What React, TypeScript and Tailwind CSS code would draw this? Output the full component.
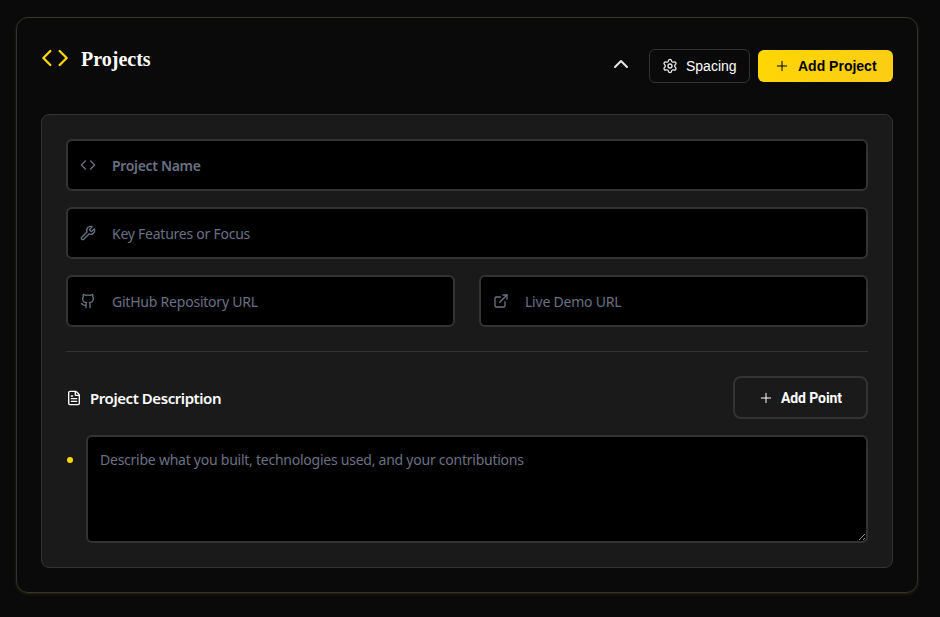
import type { LucideIcon } from 'lucide-react';
import { ChevronUp, Code, ExternalLink, FileText, Github, Plus, Settings, Wrench } from 'lucide-react';

type FieldProps = { icon: LucideIcon; placeholder: string; textClass: string };

function Field({ icon: Icon, placeholder, textClass }: FieldProps) {
  return (
    <label className="flex h-[52px] min-w-0 items-center gap-4 rounded-md border-2 border-[#333333] bg-black pl-3 pr-4">
      <Icon className="size-4 shrink-0 text-gray-500" />
      <input
        placeholder={placeholder}
        className={`relative top-px min-w-0 flex-1 bg-transparent font-['Noto_Sans',sans-serif] text-white outline-none placeholder:text-gray-500 ${textClass}`}
      />
    </label>
  );
}

export default function App() {
  return (
    <div className="h-[617px] bg-[#0a0a0a] pl-4 pr-[22px] pt-[17px] text-white">
      <section className="h-[576px] rounded-xl border border-[#333330] px-6 pt-6 shadow-[0_1px_3px_rgba(255,215,0,0.14)]">
        <header className="flex h-[72px] items-start justify-between">
          <div className="flex items-start gap-3 pt-0.5">
            <Code className="size-7 text-[#ffd700]" />
            <h2 className="pt-px font-['Liberation_Serif',serif] text-xl leading-7 font-bold">Projects</h2>
          </div>
          <div className="flex items-center gap-2 pt-[7px]">
            <button className="mr-1 flex size-8 items-center justify-center">
              <ChevronUp className="relative -top-0.5 size-6 text-gray-200" />
            </button>
            <button className="flex h-[34px] w-[101px] items-center gap-2 rounded-md border border-[#333333] pl-3 font-['Liberation_Sans',sans-serif] text-sm">
              <Settings className="size-4 text-gray-200" />
              Spacing
            </button>
            <button className="flex h-8 w-[135px] items-center gap-2 rounded-md bg-linear-135 from-[#ffd700] to-[#facc15] pl-4 font-['Liberation_Sans',sans-serif] text-sm font-bold text-black">
              <Plus className="size-4" strokeWidth={1.5} />
              Add Project
            </button>
          </div>
        </header>

        <div className="h-[454px] rounded-lg border border-[#333333] bg-[#1a1a1a] p-6">
          <div className="grid grid-cols-1 gap-4">
            <Field icon={Code} placeholder="Project Name" textClass="text-sm font-semibold tracking-[-0.33px]" />
            <Field icon={Wrench} placeholder="Key Features or Focus" textClass="text-sm tracking-[-0.25px]" />
            <div className="grid grid-cols-2 gap-6">
              <Field icon={Github} placeholder="GitHub Repository URL" textClass="text-sm tracking-[-0.22px]" />
              <Field icon={ExternalLink} placeholder="Live Demo URL" textClass="text-sm tracking-[-0.22px]" />
            </div>
          </div>

          <div className="mt-6 border-t border-[#333333] pt-6">
            <div className="flex h-[43px] items-center justify-between">
              <h3 className="flex items-center gap-2 font-['Noto_Sans',sans-serif] text-[15px] font-semibold tracking-[-0.43px]">
                <FileText className="size-4" />
                <span className="pt-px">Project Description</span>
              </h3>
              <button className="flex h-[43px] w-[135px] items-center gap-[7px] rounded-lg border-2 border-[#333333] pl-[23px] font-['Roboto',sans-serif] text-sm font-bold tracking-[-0.1px]">
                <Plus className="size-4" strokeWidth={1.5} />
                Add Point
              </button>
            </div>
            <div className="mt-4 flex">
              <span className="mt-[22px] ml-px mr-[13px] size-1.5 shrink-0 rounded-full bg-[#ffd700]" />
              <textarea
                placeholder="Describe what you built, technologies used, and your contributions"
                className="h-[108px] min-w-0 flex-1 resize-y rounded-md border-2 border-[#333333] bg-black px-3 py-3 font-['Noto_Sans',sans-serif] text-sm leading-[22px] tracking-[-0.245px] outline-none placeholder:text-gray-500"
              />
            </div>
          </div>
        </div>
      </section>
    </div>
  );
}
